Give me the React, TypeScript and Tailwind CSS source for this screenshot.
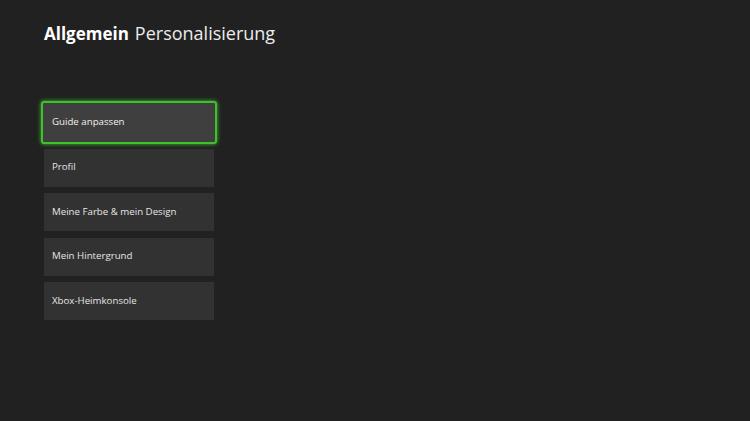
const items = [
  "Guide anpassen",
  "Profil",
  "Meine Farbe & mein Design",
  "Mein Hintergrund",
  "Xbox-Heimkonsole",
]

export default function App() {
  return (
    <div
      className="h-[421px] w-[750px] overflow-hidden bg-[#212121] text-[#e8e8e8]"
      style={{ fontFamily: '"Open Sans", "Noto Sans", sans-serif' }}
    >
      {/* Header */}
      <div className="flex items-baseline gap-[6px] px-[44px] pt-[21px] leading-[24px]">
        <span className="text-[17px] font-bold text-white">Allgemein</span>
        <span className="text-[18px] text-[#ececec]">Personalisierung</span>
      </div>

      {/* Menu */}
      <div className="ml-[44px] mt-[57px] flex w-[170px] flex-col gap-[6.5px]">
        {items.map((label, i) =>
          i === 0 ? (
            <div
              key={label}
              className="-mx-[3px] -my-[2px] flex h-[43px] items-center rounded-[3px] border-2 border-[#3ec12c] bg-[#3f3f3f] pl-[9px] text-[9.7px] text-[#f0f0f0] shadow-[0_0_4px_#3ec12c]"
            >
              {label}
            </div>
          ) : (
            <div
              key={label}
              className="flex h-[38px] items-center bg-[#323232] pl-[8px] text-[9.7px] text-[#e6e6e6]"
            >
              {label}
            </div>
          )
        )}
      </div>
    </div>
  )
}
